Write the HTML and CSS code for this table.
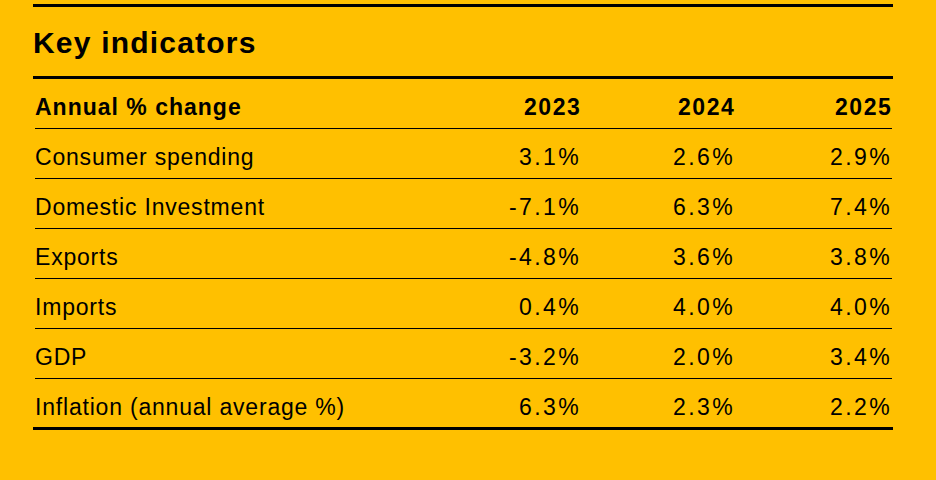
FILE: index.html
```html
<!DOCTYPE html>
<html lang="en">
<head>
<meta charset="utf-8">
<title>Key indicators</title>
<link rel="stylesheet" href="styles.css">
</head>
<body>
<section class="panel">
  <h1 class="title">Key indicators</h1>
  <div class="table">
    <div class="row head">
      <div class="label">Annual % change</div>
      <div class="num">2023</div>
      <div class="num">2024</div>
      <div class="num">2025</div>
    </div>
    <div class="row">
      <div class="label">Consumer spending</div>
      <div class="num">3.1%</div>
      <div class="num">2.6%</div>
      <div class="num">2.9%</div>
    </div>
    <div class="row">
      <div class="label">Domestic Investment</div>
      <div class="num">-7.1%</div>
      <div class="num">6.3%</div>
      <div class="num">7.4%</div>
    </div>
    <div class="row">
      <div class="label">Exports</div>
      <div class="num">-4.8%</div>
      <div class="num">3.6%</div>
      <div class="num">3.8%</div>
    </div>
    <div class="row">
      <div class="label">Imports</div>
      <div class="num">0.4%</div>
      <div class="num">4.0%</div>
      <div class="num">4.0%</div>
    </div>
    <div class="row">
      <div class="label">GDP</div>
      <div class="num">-3.2%</div>
      <div class="num">2.0%</div>
      <div class="num">3.4%</div>
    </div>
    <div class="row last">
      <div class="label">Inflation (annual average %)</div>
      <div class="num">6.3%</div>
      <div class="num">2.3%</div>
      <div class="num">2.2%</div>
    </div>
  </div>
</section>
</body>
</html>
```

FILE: styles.css
```css
html, body {
  margin: 0;
  padding: 0;
  background: #ffc000;
}

body {
  font-family: "Liberation Sans", Arial, sans-serif;
  color: #000;
  width: 936px;
  height: 480px;
  overflow: hidden;
}

.panel {
  margin: 4px 0 0 33px;
  width: 860px;
  border-top: 3px solid #000;
  border-bottom: 3px solid #000;
}

.title {
  margin: 0;
  padding: 19px 0 16px 0;
  font-size: 30px;
  line-height: 34px;
  font-weight: 700;
  letter-spacing: 1.2px;
  border-bottom: 3px solid #000;
}

.table {
  margin: 0 1px 0 2px;
}

.row {
  display: grid;
  grid-template-columns: 1fr 155px 154px 157px;
  padding: 16px 0 8px 0;
  font-size: 23px;
  line-height: 25px;
  letter-spacing: 0.8px;
  border-bottom: 1px solid #000;
}

.row.head {
  font-weight: 700;
  letter-spacing: 1px;
}

.row.last {
  border-bottom: none;
  padding-bottom: 7px;
}

.num {
  text-align: right;
  letter-spacing: 2.4px;
}

.row.head .num {
  letter-spacing: 1.6px;
  margin-right: -0.5px;
}
```
